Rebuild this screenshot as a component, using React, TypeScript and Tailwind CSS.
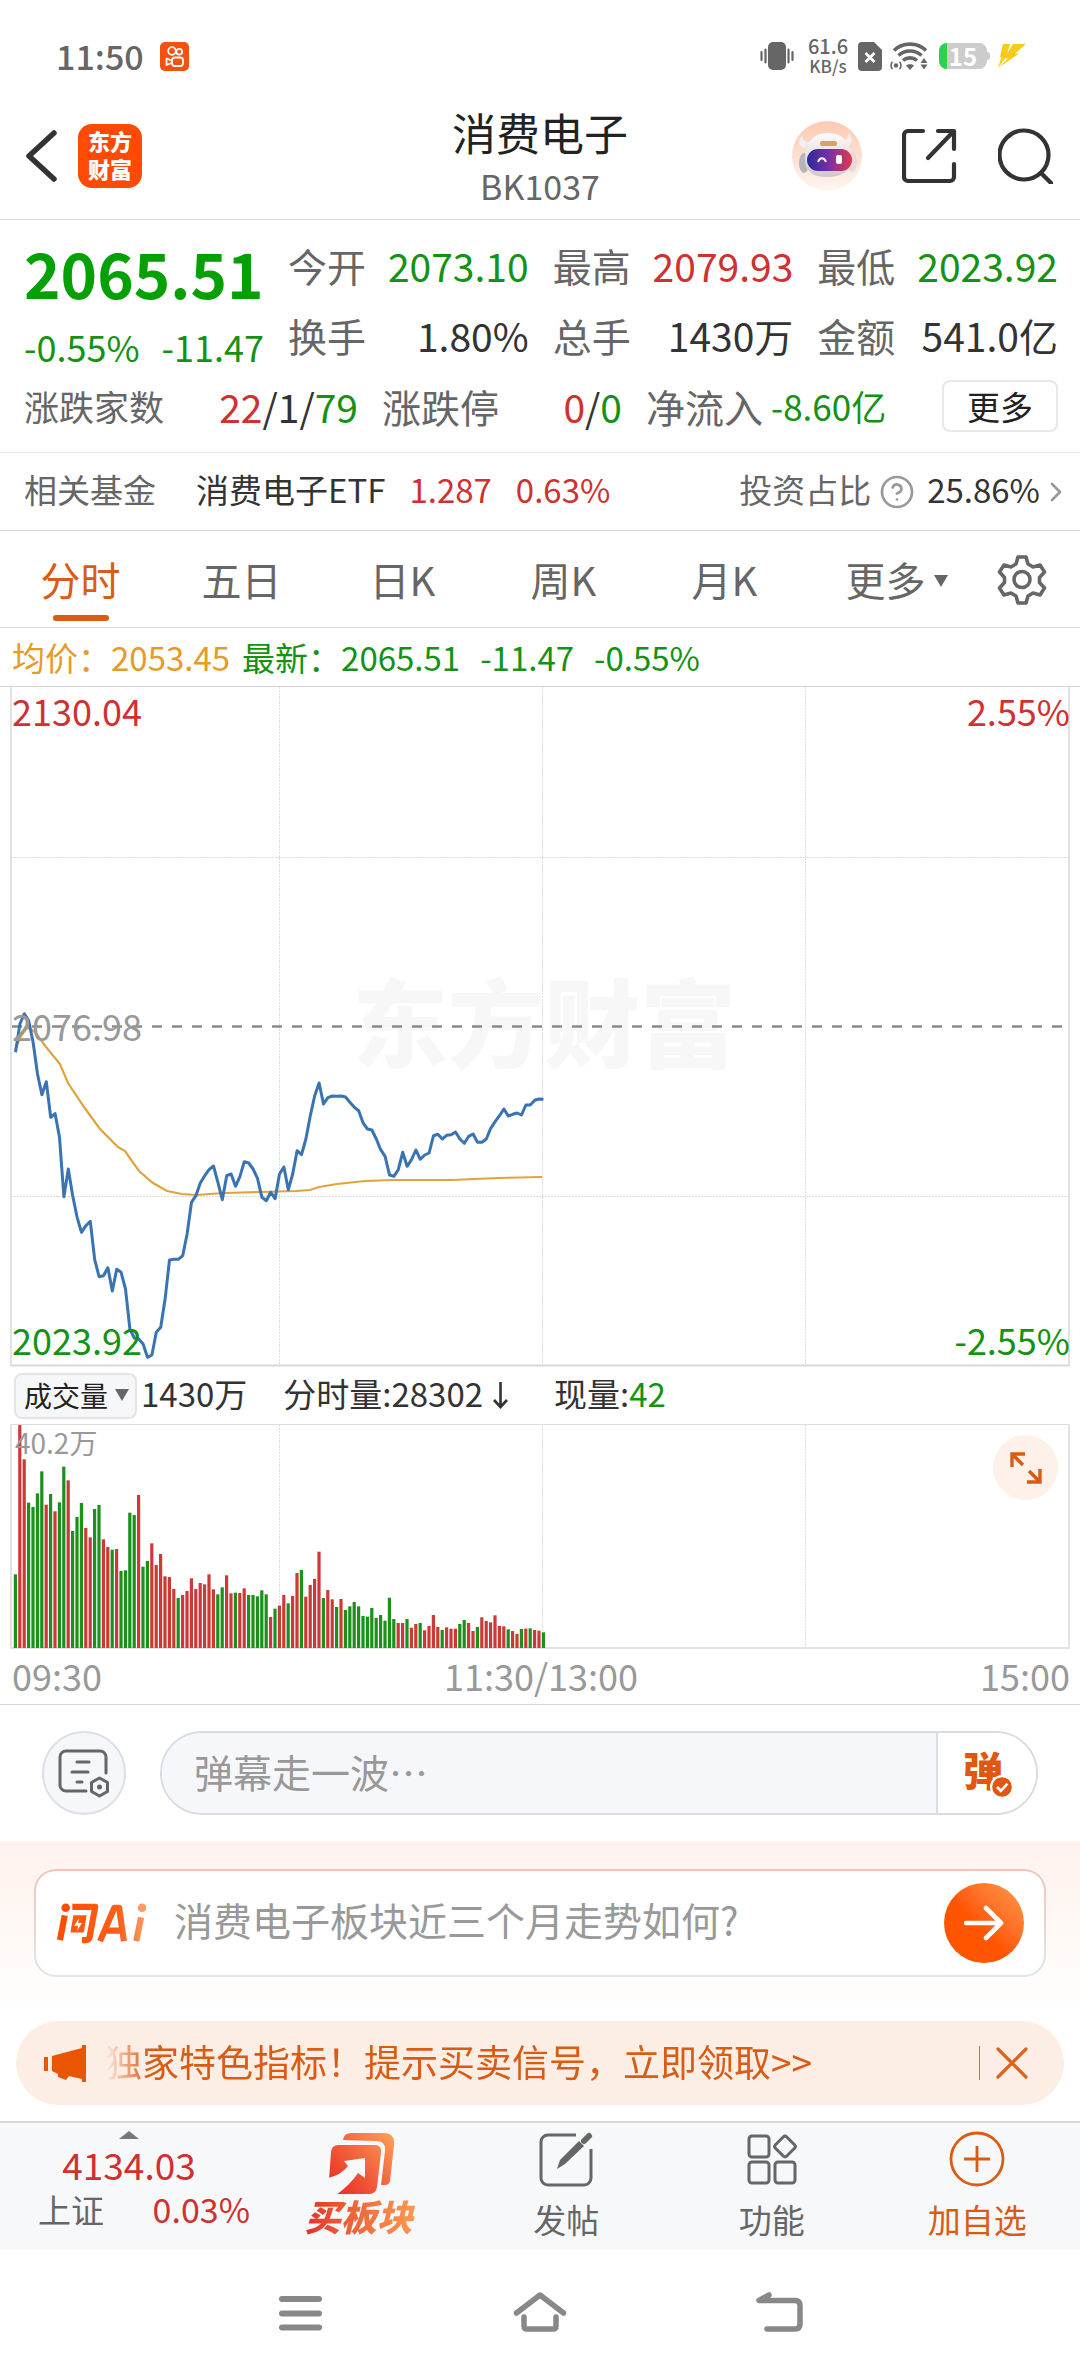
import { ChevronRight, CircleHelp } from 'lucide-react';

const CHART_LEFT = 15;
const STEP = 4.4;

// One entry per minute from 09:30 to 11:30, in thirds of a pixel below the chart's base row.
const PRICE = [
  220, 135, 104, 125, 190, 285, 347, 308, 415, 404, 475, 653, 570, 650, 715, 760, 740, 727, 842, 893,
  890, 866, 936, 871, 880, 930, 1050, 1077, 1080, 1095, 1135, 1128, 1060, 1045, 960, 843, 841, 841, 830, 765,
  670, 650, 612, 590, 572, 561, 610, 662, 590, 585, 622, 593, 548, 552, 570, 598, 655, 665, 640, 659,
  585, 564, 632, 585, 515, 527, 480, 410, 350, 312, 375, 356, 351, 352, 351, 354, 370, 385, 395, 432,
  450, 453, 480, 512, 532, 588, 592, 572, 520, 562, 542, 513, 541, 528, 522, 470, 466, 480, 469, 467,
  459, 480, 493, 472, 465, 490, 490, 480, 448, 428, 410, 390, 411, 406, 402, 408, 378, 378, 364, 360,
  361,
];

// Minute volumes. A negative value is a minute that closed lower.
const VOLUME = [
  -221, 669, 566, -436, -423, -464, -530, 430, -462, 410, -437, -544, 503, -351, -393, -435, 360, 332, -417, -429,
  326, 303, -295, 297, -231, -233, -406, -399, 459, -244, -261, 314, 249, 282, 215, 213, 177, -150, 159, 171,
  209, 177, 195, 191, 221, 176, -161, -182, 218, 164, -166, 165, 179, -159, -159, -155, -173, -161, 93, -118,
  127, 159, -134, 156, 225, -234, 154, 189, 207, 289, -150, 174, 146, -123, 147, -114, -125, -138, -125, -96,
  -94, -120, -90, -99, -82, -151, -87, 75, 75, -87, 61, 72, -75, 53, 66, 99, 63, -54, 62, 58,
  58, -72, -84, 75, 51, -63, 92, 81, 77, 98, 66, 65, -56, 51, 42, -57, 58, -59, 54, 52,
  -47,
];

const pricePoints = PRICE.map((v, i) => `${(CHART_LEFT + 0.5 + i * STEP).toFixed(1)},${(293 + v / 3).toFixed(1)}`).join(' ');

function StatusBar() {
  return (
    <div className="flex h-24 items-center pt-4 pr-[54px] pl-14 text-[#666]">
      <span className="text-[34px] leading-10 font-medium">11:50</span>
      <svg className="ml-4 h-[29px] w-[29px]" viewBox="0 0 29 29" fill="none" stroke="#fff" strokeWidth="1.8">
        <rect width="29" height="29" rx="5" fill="#f4500f" stroke="none" />
        <circle cx="12" cy="9" r="3.8" />
        <circle cx="19.2" cy="9.8" r="2.9" />
        <rect x="12" y="15.5" width="11" height="8.5" rx="2.8" />
        <path d="M11.5 18.5 6.5 16.5v6.5l5-2" strokeLinejoin="round" />
      </svg>
      <div className="ml-auto flex items-center">
        <svg className="h-[30px] w-[34px]" viewBox="0 0 34 30" stroke="#666" strokeWidth="2.2" strokeLinecap="round">
          <rect x="8" y="1" width="18" height="28" rx="5" fill="#666" stroke="none" />
          <path d="M1.5 11v8M5.5 8.5v13M28.5 8.5v13M32.5 11v8" />
        </svg>
        <div className="ml-3 flex w-[44px] flex-col items-center font-medium">
          <span className="text-[20px] leading-5">61.6</span>
          <span className="text-[17px] leading-5">KB/s</span>
        </div>
        <svg className="ml-2 h-[29px] w-6" viewBox="0 0 24 29">
          <path d="M4 0h12l8 8v17a4 4 0 0 1-4 4H4a4 4 0 0 1-4-4V4a4 4 0 0 1 4-4z" fill="#666" />
          <path d="m7.5 11 9 9m0-9-9 9" stroke="#fff" strokeWidth="2.8" />
        </svg>
        <svg className="ml-2 h-7 w-[38px]" viewBox="0 0 38 28" fill="none" stroke="#666" strokeWidth="3.6">
          <path d="M4 8.5C12.5 0 27.5 0 36 8.5M8.5 13.5c6.5-6 16.5-6 23 0M13 18.5c4-3.5 10-3.5 14 0" />
          <path d="m16 23.5 4 4.5 4-4.5c-2.2-1.8-5.8-1.8-8 0z" fill="#666" stroke="none" />
          <circle cx="6" cy="23.5" r="2.2" fill="#666" stroke="none" />
          <path d="M2.5 19.8c-2 2-2 5.4 0 7.4M9.5 19.8c2 2 2 5.4 0 7.4" strokeWidth="1.6" />
          <path d="m34 16 3.5 5h-7zM34 27.5l3.500-5h-7z" fill="#666" stroke="none" />
        </svg>
        <div className="relative ml-[11px] flex h-[26px] w-12 items-center justify-center rounded-lg bg-[#ccc]">
          <span className="absolute inset-y-0 left-0 w-2 rounded-l-lg bg-[#2fd04a]" />
          <span className="text-[24px] leading-6 font-bold text-white">15</span>
        </div>
        <span className="h-2 w-[3px] rounded-r bg-[#ccc]" />
        <svg className="ml-2 h-6 w-7" viewBox="0 0 28 24" fill="#f7cb1c">
          <path d="M5 0h7L8.5 12 0 24 3.5 13H2z" />
          <path d="M15 0h13L17 9.5h4L0 24l10-9.500H6z" />
        </svg>
      </div>
    </div>
  );
}

function Robot() {
  return (
    <svg className="h-[70px] w-[70px]" viewBox="0 0 70 70">
      <defs>
        <linearGradient id="robotBg" x1="0" y1="0" x2="0" y2="1">
          <stop offset="0" stopColor="#fcc9b0" />
          <stop offset="1" stopColor="#fff6f1" />
        </linearGradient>
        <linearGradient id="robotFace" x1="0" y1="0" x2="1" y2="0">
          <stop offset="0" stopColor="#2c2a9c" />
          <stop offset=".5" stopColor="#7b2fa5" />
          <stop offset="1" stopColor="#e0384a" />
        </linearGradient>
        <linearGradient id="robotHead" x1="0" y1="0" x2="0" y2="1">
          <stop offset="0" stopColor="#fdfbfb" />
          <stop offset="1" stopColor="#cfc8cc" />
        </linearGradient>
      </defs>
      <circle cx="35" cy="35" r="35" fill="url(#robotBg)" />
      <path d="M10 15c-4 4-4 10 2 12l8-6c-6 1-9-2-10-6zM57 12c4 5 4 11-2 14l-8-6c6 0 9-3 10-8z" fill="#f3edee" />
      <ellipse cx="12" cy="42" rx="5" ry="10" fill="#b9b2b8" />
      <ellipse cx="60" cy="41" rx="5" ry="10" fill="#e3dadd" />
      <path d="M36 12c16 0 23 11 23 26 0 12-9 18-24 18S13 50 13 38c0-15 7-26 23-26z" fill="url(#robotHead)" />
      <rect x="28" y="20" width="17" height="5" rx="2" fill="#dda063" />
      <rect x="15" y="28" width="45" height="22" rx="11" fill="url(#robotFace)" />
      <path d="M26 41c2-5 6-5 8 0" fill="none" stroke="#fff" strokeWidth="2" />
      <rect x="44" y="34" width="6" height="9" rx="2" fill="#fff" />
    </svg>
  );
}

function Header() {
  return (
    <header className="grid h-[124px] grid-cols-[1fr_auto_1fr] items-center border-b border-[#d8d8d8] px-[26px]">
      <div className="flex items-center gap-5 pb-1">
        <button aria-label="返回">
          <svg className="h-[54px] w-8" viewBox="0 0 32 54" fill="none" stroke="#333" strokeWidth="5.5" strokeLinecap="round" strokeLinejoin="round">
            <path d="M28 4 3 27l25 23" />
          </svg>
        </button>
        <a href="#" className="flex h-16 w-16 flex-col items-center justify-center rounded-[14px] bg-[#ff4a05] pb-1 text-[22px] leading-7 font-black text-white">
          <span>东方</span>
          <span>财富</span>
        </a>
      </div>
      <div className="flex flex-col items-center">
        <h1 className="text-[44px] leading-[56px] text-[#222]">消费电子</h1>
        <span className="text-[34px] leading-[52px] text-[#666]">BK1037</span>
      </div>
      <div className="flex items-center justify-end gap-10 pb-1">
        <button aria-label="智能助手"><Robot /></button>
        <button aria-label="分享">
          <svg className="h-14 w-14" viewBox="0 0 56 56" fill="none" stroke="#333" strokeWidth="4.2" strokeLinecap="round" strokeLinejoin="round">
            <path d="M21 3H6a4 4 0 0 0-4 4v42a4 4 0 0 0 4 4h42a4 4 0 0 0 4-4V36" />
            <path d="M36 3h16v18M51 4 26 30" />
          </svg>
        </button>
        <button aria-label="搜索">
          <svg className="h-14 w-14" viewBox="0 0 56 56" fill="none" stroke="#333" strokeWidth="4.2" strokeLinecap="round">
            <circle cx="26" cy="27" r="24.5" />
            <path d="m43 45 10 10" />
          </svg>
        </button>
      </div>
    </header>
  );
}

const QUOTES = [
  { label: '今开', value: '2073.10', color: 'text-[#149214]' },
  { label: '最高', value: '2079.93', color: 'text-[#d03030]' },
  { label: '最低', value: '2023.92', color: 'text-[#149214]' },
  { label: '换手', value: '1.80%', color: 'text-[#333]' },
  { label: '总手', value: '1430万', color: 'text-[#333]' },
  { label: '金额', value: '541.0亿', color: 'text-[#333]' },
];

function Quote() {
  return (
    <section className="border-b border-[#e8e8e8] pt-[10px] pr-[22px] pb-[18px] pl-6 text-[#666]">
      <div className="flex gap-6">
        <div className="w-60 text-[#149214]">
          <div className="text-[62px] leading-[84px] font-bold text-[#05a005]">2065.51</div>
          <div className="flex justify-between text-[36px] leading-[64px]">
            <span>-0.55%</span>
            <span>-11.47</span>
          </div>
        </div>
        <dl className="grid flex-1 grid-cols-3 content-start gap-x-6 text-[39px] leading-[70px]">
          {QUOTES.map((q) => (
            <div key={q.label} className="flex justify-between">
              <dt>{q.label}</dt>
              <dd className={q.color}>{q.value}</dd>
            </div>
          ))}
        </dl>
      </div>
      <div className="flex items-center text-[39px] leading-[56px]">
        <div className="flex w-[334px] justify-between">
          <span className="text-[35px]">涨跌家数</span>
          <span className="text-[#333]">
            <span className="text-[#d03030]">22</span>/1/<span className="text-[#149214]">79</span>
          </span>
        </div>
        <div className="ml-6 flex w-60 justify-between">
          <span>涨跌停</span>
          <span className="text-[#333]">
            <span className="text-[#d03030]">0</span>/<span className="text-[#149214]">0</span>
          </span>
        </div>
        <span className="ml-6">净流入</span>
        <span className="ml-2 text-[35px] text-[#149214]">-8.60亿</span>
        <button className="ml-auto h-[52px] w-[116px] rounded-lg border-2 border-[#e8e8e8] text-[33px] leading-[44px] text-[#222]">更多</button>
      </div>
    </section>
  );
}

function FundRow() {
  return (
    <a href="#" className="flex h-[78px] items-center border-b border-[#d8d8d8] pr-4 pb-1 pl-6 text-[33px] text-[#666]">
      <span>相关基金</span>
      <span className="ml-10 text-[#333]">消费电子ETF</span>
      <span className="ml-6 text-[#d03030]">1.287</span>
      <span className="ml-6 text-[#d03030]">0.63%</span>
      <span className="ml-auto">投资占比</span>
      <CircleHelp className="mt-1 ml-2 h-9 w-9 text-[#999]" strokeWidth={1.8} />
      <span className="ml-3 text-[#333]">25.86%</span>
      <ChevronRight className="mt-1 -mr-2 h-8 w-8 text-[#999]" strokeWidth={2} />
    </a>
  );
}

const PERIODS = ['分时', '五日', '日K', '周K', '月K'];

function Tabs() {
  return (
    <nav className="flex h-[97px] border-b border-[#d8d8d8] text-[40px] text-[#666]">
      {PERIODS.map((name, i) => (
        <button key={name} className={i === 0 ? 'flex w-[161px] flex-col items-center pt-5 text-[#d95b14]' : 'flex w-[161px] flex-col items-center pt-5'}>
          <span className="leading-[56px]">{name}</span>
          {i === 0 && <span className="mt-2 h-[6px] w-14 rounded-full bg-[#d95b14]" />}
        </button>
      ))}
      <button className="flex flex-1 items-start justify-center gap-2 pt-5 pl-4">
        <span className="leading-[56px]">更多</span>
        <svg className="mt-6 h-3 w-[14px]" viewBox="0 0 14 12" fill="#666"><path d="M0 0h14L7 12z" /></svg>
      </button>
      <button aria-label="设置" className="pr-8 pl-6">
        <svg className="h-[52px] w-[52px]" viewBox="0 0 52 52" fill="none" stroke="#666" strokeWidth="3.6" strokeLinejoin="round">
          <path d="M22 4h8l2 7 5 3 7-2 4.500 7-5 5.500v5l5 5.500-4.500 7-7-2-5 3-2 7h-8l-2-7-5-3-7 2-4.500-7 5-5.500v-5l-5-5.500 4.500-7 7 2 5-3z" />
          <circle cx="26" cy="26.5" r="8" />
        </svg>
      </button>
    </nav>
  );
}

function PriceChart() {
  return (
    <section>
      <div className="flex h-[58px] items-center pl-3 text-[33px] leading-[54px] text-[#149214]">
        <span className="text-[#e69a28]">均价：2053.45</span>
        <span className="ml-3">最新：2065.51</span>
        <span className="ml-5">-11.47</span>
        <span className="ml-5">-0.55%</span>
      </div>
      <div className="relative text-[36px] leading-10">
        <svg className="block h-auto w-full" viewBox="0 0 1080 681" fill="none">
          <text x="352" y="374" fontSize="96" fontWeight="900" fill="#f7f7f7">东方财富</text>
          <path d="M11 1V680M1069 1V680" stroke="#e2e2e2" strokeWidth="2" />
          <path d="M0 .5H1080" stroke="#d4d4d4" />
          <path d="M11 679.5H1069" stroke="#d8d8d8" strokeWidth="2" />
          <path d="M279.5 1V679M542.5 1V679M805.5 1V679M11 171.5H1069M11 510.5H1069" stroke="#dcdcdc" strokeDasharray="2 1" />
          <path d="M12 340.5H1064" stroke="#8a8a8a" strokeWidth="2.4" strokeDasharray="10 10" />
          <path
            d="M15.500 363 21 350 26 343 29 342 35 346 46 361 60 378 68 397 84 421 100 443 118 461 125 465 139 485 153 497 167 505 182 508 196 509 224 507 260 506 296 505 310 504 319 501 337 498 365 495 393 494 452 494 498 492 542 491"
            stroke="#e0a43c"
            strokeWidth="2.2"
          />
          <polyline points={pricePoints} stroke="#3973b2" strokeWidth="3" strokeLinejoin="round" />
        </svg>
        <span className="absolute top-1 left-3 text-[#d03030]">2130.04</span>
        <span className="absolute top-1 right-[10px] text-[#d03030]">2.55%</span>
        <span className="absolute top-1/2 left-3 -translate-y-1/2 pb-1 text-[#999]">2076.98</span>
        <span className="absolute bottom-2 left-3 text-[#149214]">2023.92</span>
        <span className="absolute right-[10px] bottom-2 text-[#149214]">-2.55%</span>
      </div>
    </section>
  );
}

function VolumeChart() {
  return (
    <section className="border-b border-[#d8d8d8]">
      <div className="flex h-[57px] items-center pl-[14px] text-[33px] text-[#333]">
        <div className="relative">
          <select aria-label="指标" className="block h-[46px] w-[123px] appearance-none rounded-lg border-2 border-[#e3e5e9] bg-[#f6f7f9] pb-1 pl-2 text-[28px] leading-10 text-[#222]">
            <option>成交量</option>
          </select>
          <svg className="pointer-events-none absolute top-4 right-2 h-3 w-[14px]" viewBox="0 0 14 12" fill="#666"><path d="M0 0h14L7 12z" /></svg>
        </div>
        <span className="ml-1 pb-1">1430万</span>
        <span className="ml-9 pb-1">分时量:28302</span>
        <svg className="ml-[10px] h-[27px] w-[15px]" viewBox="0 0 15 27" fill="none" stroke="#333" strokeWidth="2.6"><path d="M7.5 0v25M1 18l6.500 7L14 18" /></svg>
        <span className="ml-[46px] pb-1">现量:<span className="text-[#149214]">42</span></span>
      </div>
      <div className="relative">
        <svg className="block h-auto w-full" viewBox="0 0 1080 225">
          <path d="M11 .5H1069" stroke="#dcdcdc" />
          <path d="M11 0V225M1069 0V225M11 224H1069" stroke="#e2e2e2" strokeWidth="2" />
          <path d="M279.5 1V224M542.5 1V224M805.5 1V224" stroke="#dcdcdc" strokeDasharray="2 1" />
          {VOLUME.map((v, i) => (
            <rect key={i} x={13.8 + i * STEP} y={224 - Math.abs(v) / 3} width="3.2" height={Math.abs(v) / 3} fill={v > 0 ? '#cc3a38' : '#1b901b'} />
          ))}
        </svg>
        <span className="absolute top-0 left-[15px] text-[28px] leading-9 text-[#999]">40.2万</span>
        <button aria-label="全屏" className="absolute top-[11px] right-[22px] flex h-[65px] w-[65px] items-center justify-center rounded-full bg-[#fef1ea]">
          <svg className="h-8 w-8" viewBox="0 0 32 32" fill="none" stroke="#d95b14" strokeWidth="3.4">
            <path d="M2 15V2H15M2 2l11 11M30 17V30H17M30 30 19 19" />
          </svg>
        </button>
      </div>
      <div className="grid h-[55px] grid-cols-3 pr-[10px] pl-3 text-[36px] leading-[52px] text-[#999]">
        <span>09:30</span>
        <span className="text-center">11:30/13:00</span>
        <span className="text-right">15:00</span>
      </div>
    </section>
  );
}

function BulletRow() {
  return (
    <div className="flex items-center gap-[34px] px-[42px] py-[26px]">
      <button aria-label="弹幕设置" className="flex h-[84px] w-[84px] items-center justify-center rounded-full border-2 border-[#dcdfe4] bg-[#f6f7fa]">
        <svg className="h-[50px] w-[52px]" viewBox="0 0 52 50" fill="none" stroke="#666" strokeWidth="3" strokeLinecap="round">
          <path d="M28 43H8a6 6 0 0 1-6-6V9a6 6 0 0 1 6-6h34a6 6 0 0 1 6 6v16" />
          <path d="M19 14h12M14 24h16M19 34h5" />
          <path d="m41.5 30 8 4.500v9l-8 4.500-8-4.500v-9z" strokeLinejoin="round" />
          <circle cx="41.5" cy="39" r="2.5" fill="#666" stroke="none" />
        </svg>
      </button>
      <div className="flex h-[84px] flex-1 overflow-hidden rounded-full border-2 border-[#d9dce1]">
        <input aria-label="弹幕" placeholder="弹幕走一波…" className="min-w-0 flex-1 bg-[#f6f7fa] pb-1 pl-8 text-[39px] outline-none placeholder:text-[#999]" />
        <button aria-label="弹幕开关" className="relative w-[100px] border-l-2 border-[#d9dce1] bg-white pr-2 pb-2 text-[40px] leading-[72px] font-black text-[#e0570d]">
          弹
          <svg className="absolute right-[22px] bottom-[14px] h-6 w-6" viewBox="0 0 22 22">
            <circle cx="11" cy="11" r="10" fill="#e0570d" stroke="#fff" strokeWidth="2" />
            <path d="m6.5 11 3.500 3.500 6-6.500" fill="none" stroke="#fff" strokeWidth="2.4" />
          </svg>
        </button>
      </div>
    </div>
  );
}

function AskCard() {
  return (
    <div className="bg-linear-to-b from-[#fff2ec] to-white px-[34px] pt-7 pb-11">
      <div className="rounded-[22px] bg-linear-to-b from-[#f1c4bb] to-[#dde5ec] p-[2px]">
        <div className="flex h-[104px] items-center rounded-[20px] bg-white px-5">
          <svg className="h-[42px] w-[90px]" viewBox="0 0 94 44" fill="none">
            <defs>
              <linearGradient id="ask" gradientUnits="userSpaceOnUse" x1="0" y1="0" x2="94" y2="0">
                <stop offset="0" stopColor="#ff4d00" />
                <stop offset=".7" stopColor="#f8601a" />
                <stop offset="1" stopColor="#ff9b62" />
              </linearGradient>
            </defs>
            <g stroke="url(#ask)" strokeWidth="6.5" strokeLinejoin="round">
              <path d="m9 14-5 26M17 5h24l-6 32q-1 3-4 3h-4" />
              <path d="m46 41 15-35h5l5 35M52 30h17" />
              <path d="m89 16-5 25" />
            </g>
            <circle cx="10" cy="6" r="4.5" fill="#ff4d00" />
            <circle cx="90" cy="6" r="4.5" fill="#ff9b62" />
            <path d="M18 14h14l-3 18H15z" fill="#ff5a10" />
            <path d="m24 17-5 8h4l-1 5 5-8h-4z" fill="#fff" />
          </svg>
          <input aria-label="问AI" placeholder="消费电子板块近三个月走势如何?" className="ml-7 min-w-0 flex-1 pb-2 text-[39px] outline-none placeholder:text-[#999]" />
          <button aria-label="发送" className="flex h-20 w-20 items-center justify-center rounded-full bg-linear-to-tr from-[#ff5500] from-45% to-[#ff9a48]">
            <svg className="h-10 w-10" viewBox="0 0 40 40" fill="none" stroke="#fff" strokeWidth="4.6" strokeLinecap="round" strokeLinejoin="round">
              <path d="M2 20h35M22 5l15 15-15 15" />
            </svg>
          </button>
        </div>
      </div>
    </div>
  );
}

function Promo() {
  return (
    <div className="px-4 pb-4">
      <div className="flex h-[84px] items-center rounded-full bg-[#fceee5] pr-9 pl-7 text-[#d95b14]">
        <svg className="h-[37px] w-[43px]" viewBox="0 0 43 37" fill="#ea5504">
          <path d="M0 12h4v14H0zM8 11 38 3V0h4v37h-4v-3l-13-3-3 4-8-3v-3l-6-3z" />
        </svg>
        <a href="#" className="ml-[18px] flex-1 mask-linear-90 mask-linear-from-transparent mask-linear-from-0% mask-linear-to-black mask-linear-to-5% pb-1 text-[37px] leading-[52px]">
          独家特色指标！提示买卖信号，立即领取&gt;&gt;
        </a>
        <span className="h-[34px] w-px bg-[#c8783c]" />
        <button aria-label="关闭" className="ml-4">
          <svg className="h-8 w-8" viewBox="0 0 32 32" stroke="#e0611c" strokeWidth="3.2" strokeLinecap="round"><path d="m2 2 28 28M30 2 2 30" /></svg>
        </button>
      </div>
    </div>
  );
}

function BottomBar() {
  return (
    <nav className="flex h-[129px] border-t-2 border-[#d8d8d8] bg-[#f7f8fa] text-[33px] leading-10 text-[#666]">
      <button className="flex w-[258px] flex-col items-center pt-2">
        <svg className="h-2 w-5" viewBox="0 0 20 8" fill="#77787c"><path d="M0 8 10 0l10 8z" /></svg>
        <span className="text-[37px] leading-[50px] text-[#d03030]">4134.03</span>
        <span className="flex w-full justify-between pr-2 pl-[38px]">
          <span>上证</span>
          <span className="text-[34px] text-[#d03030]">0.03%</span>
        </span>
      </button>
      <button className="flex flex-1 flex-col items-center pt-[10px]">
        <svg className="h-[62px] w-[66px]" viewBox="0 0 66 62">
          <defs>
            <linearGradient id="buy" gradientUnits="userSpaceOnUse" x1="0" y1="62" x2="66" y2="0">
              <stop offset="0" stopColor="#e8241f" />
              <stop offset=".5" stopColor="#f2603c" />
              <stop offset="1" stopColor="#fda258" />
            </linearGradient>
          </defs>
          <path d="M15 7q1-7 8-7h33q11 0 10 12l-4 36q-1 4-5 4h-4l4-34q1-10-9-10z" fill="url(#buy)" />
          <path d="M10 12h37q7 0 6 8l-4 34q-1 7-8 7H0l3-42q1-7 7-7z" fill="url(#buy)" />
          <path d="M37 25 16 28l4 5Q13 42 0 45l-2 17h10Q22 52 30 40l7 5z" fill="#f7f8fa" />
        </svg>
        <span className="bg-linear-to-r from-[#e0302a] to-[#fd9a50] bg-clip-text pr-1 text-[36px] leading-10 font-black text-transparent italic">买板块</span>
      </button>
      <button className="flex flex-1 flex-col items-center gap-3 pt-2">
        <svg className="h-14 w-14" viewBox="0 0 56 56" fill="none" stroke="#666" strokeWidth="3">
          <path d="M38 4H10a7 7 0 0 0-7 7v36a7 7 0 0 0 7 7h36a7 7 0 0 0 7-7V18" />
          <path d="m19 38 3-9 19-19 5 5-19 18z" fill="#666" stroke="none" />
          <path d="m46 10 5-5" strokeWidth="6" strokeLinecap="round" />
        </svg>
        <span>发帖</span>
      </button>
      <button className="flex flex-1 flex-col items-center gap-3 pt-2">
        <svg className="h-14 w-14" viewBox="0 0 56 56" fill="none" stroke="#666" strokeWidth="3">
          <rect x="5" y="5" width="20" height="21" rx="3" />
          <rect x="5" y="31" width="20" height="21" rx="3" />
          <rect x="31" y="31" width="20" height="21" rx="3" />
          <rect x="33" y="7.5" width="16" height="16" rx="2.5" transform="rotate(45 41 15.5)" />
        </svg>
        <span>功能</span>
      </button>
      <button className="flex flex-1 flex-col items-center gap-3 pt-2 text-[#d95b14]">
        <svg className="h-14 w-14" viewBox="0 0 56 56" fill="none" stroke="#d95b14" strokeWidth="2.8">
          <circle cx="28" cy="28" r="26" />
          <path d="M15 28h26M28 15v26" />
        </svg>
        <span>加自选</span>
      </button>
    </nav>
  );
}

function SystemNav() {
  return (
    <div className="grid h-[126px] grid-cols-[1fr_240px_240px_240px_1fr] items-center justify-items-center">
      <span />
      <button aria-label="最近任务">
        <svg className="h-[42px] w-14" viewBox="0 0 56 42" stroke="#888" strokeWidth="6" strokeLinecap="round"><path d="M10 7h37M10 21.5h37M10 35.5h37" /></svg>
      </button>
      <button aria-label="主页">
        <svg className="h-[42px] w-14" viewBox="0 0 56 42" fill="none" stroke="#888" strokeWidth="5.5" strokeLinecap="round" strokeLinejoin="round">
          <path d="M4.5 21 28 3l23.500 18M12 25v9q0 3 3 3h26q3 0 3-3v-9" />
        </svg>
      </button>
      <button aria-label="后退">
        <svg className="h-[42px] w-14" viewBox="0 0 56 42" fill="none" stroke="#888" strokeWidth="5.5" strokeLinecap="round" strokeLinejoin="round">
          <path d="M17 3 7 8.500h36q5 0 5 5V32q0 5-5 5H15" />
        </svg>
      </button>
      <span />
    </div>
  );
}

export default function App() {
  return (
    <div className="min-h-screen bg-white font-['Noto_Sans_CJK_SC',sans-serif]">
      <StatusBar />
      <Header />
      <Quote />
      <FundRow />
      <Tabs />
      <PriceChart />
      <VolumeChart />
      <BulletRow />
      <AskCard />
      <Promo />
      <BottomBar />
      <SystemNav />
    </div>
  );
}
